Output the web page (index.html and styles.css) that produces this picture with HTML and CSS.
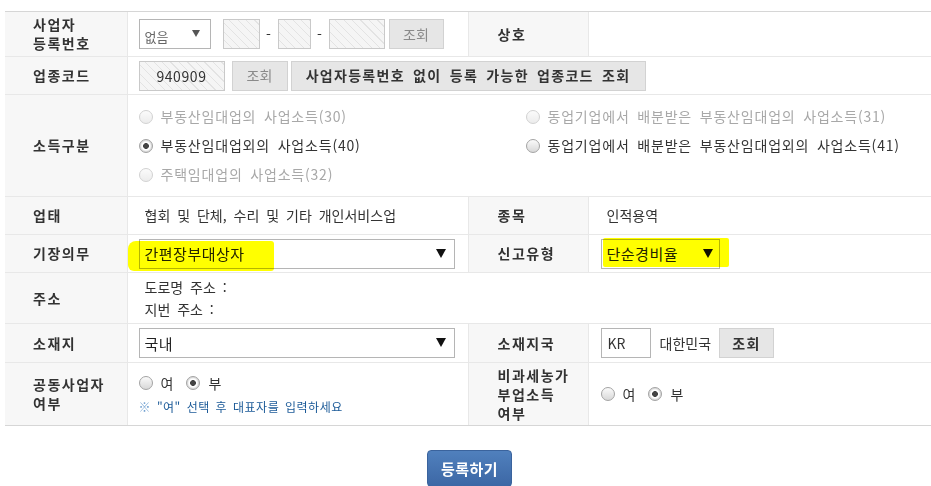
FILE: index.html
```html
<!DOCTYPE html>
<html lang="ko">
<head>
<meta charset="utf-8">
<title>사업자 정보</title>
<link rel="stylesheet" href="styles.css">
</head>
<body>
<div class="page">
<table class="form">
  <colgroup><col class="col-l1"><col class="col-v1"><col class="col-l2"><col class="col-v2"></colgroup>
  <tr class="r45">
    <th>사업자<br>등록번호</th>
    <td>
      <div class="line">
        <div class="sel sel-small"><span>없음</span><i class="arr arr-small"></i></div>
        <span class="hatch w37"></span><span class="dash">-</span><span class="hatch w32"></span><span class="dash">-</span><span class="hatch w56"></span>
        <button class="btn btn-dim w55">조회</button>
      </div>
    </td>
    <th class="th2">상호</th>
    <td class="td2"></td>
  </tr>
  <tr class="r38">
    <th>업종코드</th>
    <td colspan="3">
      <div class="line gap3">
        <span class="hatch code">940909</span>
        <button class="btn btn-dim w56">조회</button>
        <button class="btn btn-strong long">사업자등록번호 없이 등록 가능한 업종코드 조회</button>
      </div>
    </td>
  </tr>
  <tr class="r102">
    <th>소득구분</th>
    <td colspan="3">
      <div class="income">
        <label class="opt dis"><span class="rd"></span>부동산임대업의 사업소득(30)</label>
        <label class="opt dis"><span class="rd"></span>동업기업에서 배분받은 부동산임대업의 사업소득(31)</label>
        <label class="opt"><span class="rd on"></span>부동산임대업외의 사업소득(40)</label>
        <label class="opt"><span class="rd"></span>동업기업에서 배분받은 부동산임대업외의 사업소득(41)</label>
        <label class="opt dis"><span class="rd"></span>주택임대업의 사업소득(32)</label>
      </div>
    </td>
  </tr>
  <tr class="r38">
    <th>업태</th>
    <td><span class="txt">협회 및 단체, 수리 및 기타 개인서비스업</span></td>
    <th class="th2">종목</th>
    <td class="td2"><span class="txt">인적용역</span></td>
  </tr>
  <tr class="r38">
    <th>기장의무</th>
    <td class="hl-cell">
      <span class="hl hl-1"></span>
      <div class="sel sel-wide"><span class="val">간편장부대상자</span><i class="arr"></i></div>
    </td>
    <th class="th2">신고유형</th>
    <td class="td2 hl-cell">
      <span class="hl hl-2"></span>
      <div class="sel sel-mid"><span class="val">단순경비율</span><i class="arr"></i></div>
    </td>
  </tr>
  <tr class="r51">
    <th>주소</th>
    <td colspan="3" class="addr">
      <div class="txt">도로명 주소 :</div>
      <div class="txt">지번 주소 :</div>
    </td>
  </tr>
  <tr class="r39">
    <th>소재지</th>
    <td><div class="sel sel-wide"><span class="val">국내</span><i class="arr"></i></div></td>
    <th class="th2">소재지국</th>
    <td class="td2">
      <div class="line">
        <span class="inp kr">KR</span>
        <span class="country">대한민국</span>
        <button class="btn btn-strong w55">조회</button>
      </div>
    </td>
  </tr>
  <tr class="r63">
    <th>공동사업자<br>여부</th>
    <td>
      <div class="yn">
        <label class="opt"><span class="rd"></span>여</label>
        <label class="opt"><span class="rd on"></span>부</label>
      </div>
      <div class="note"><span class="mark">※</span> "여" 선택 후 대표자를 입력하세요</div>
    </td>
    <th class="th2">비과세농가<br>부업소득<br>여부</th>
    <td class="td2">
      <div class="yn">
        <label class="opt"><span class="rd"></span>여</label>
        <label class="opt"><span class="rd on"></span>부</label>
      </div>
    </td>
  </tr>
</table>
<div class="actions"><button class="submit">등록하기</button></div>
</div>
</body>
</html>
```
FILE: styles.css
```css
* { box-sizing: border-box; }
html, body { margin: 0; background: #fff; }
body {
  font-family: "Noto Sans CJK KR", "Noto Sans", sans-serif;
  font-size: 14px;
  line-height: 19px;
  color: #333;
  word-spacing: 3px;
}
.page { padding: 11px 0 0 5px; width: 931px; }

.form {
  border-collapse: collapse;
  table-layout: fixed;
  width: 926px;
}
.col-l1 { width: 122px; }
.col-v1 { width: 341px; }
.col-l2 { width: 120px; }
.col-v2 { width: 343px; }

.form th, .form td {
  border-top: 1px solid #e8e8e8;
  border-left: 1px solid #e8e8e8;
  vertical-align: middle;
  padding: 0;
}
.form tr > :first-child { border-left: 0; }
.form tr:first-child > * { border-top-color: #d6d6d6; }
.form tr:last-child > * { border-bottom: 1px solid #d6d6d6; }

.form th {
  background: #f7f7f7;
  text-align: left;
  font-weight: bold;
  letter-spacing: 1.5px;
  padding-left: 28px;
  color: #333;
}
.form th.th2 { padding-left: 29px; }
.form td { padding-left: 11px; }
.form td.td2 { padding-left: 12px; }

.r45 > * { height: 45px; }
.r38 > * { height: 38px; }
.r102 > * { height: 102px; }
.r51 > * { height: 51px; }
.r39 > * { height: 39px; }
.r63 > * { height: 63px; }

.line { display: flex; align-items: center; }
.gap3 { gap: 3px; }
.txt { padding-left: 6px; }

/* select boxes */
.sel {
  display: flex;
  align-items: center;
  justify-content: space-between;
  height: 30px;
  border: 1px solid #b5b5b5;
  background: #fff;
  padding: 0 8px 0 5px;
  color: #222;
}
.sel .val { font-size: 15px; letter-spacing: 0.5px; }
.sel-small { width: 72px; font-size: 13px; color: #666; padding: 4px 10px 0 5px; margin-right: 12px; }
.sel-wide { width: 316px; }
.sel-mid { width: 119px; padding-right: 6px; }
.arr {
  display: block;
  width: 0; height: 0;
  border-left: 5px solid transparent;
  border-right: 5px solid transparent;
  border-top: 9px solid #111;
  margin-top: -1px;
}
.arr-small { border-left-width: 4px; border-right-width: 4px; border-top: 7px solid #555; margin-top: -5px; }

/* hatched inputs */
.hatch {
  display: inline-block;
  height: 30px;
  border: 1px solid #c9c9c9;
  background: repeating-linear-gradient(45deg, #f5f5f5 0 5px, #e3e3e3 5px 6px);
}
.w37 { width: 37px; }
.w32 { width: 33px; }
.w56 { width: 56px; }
.dash { width: 18px; text-align: center; color: #333; }
.code { width: 86px; line-height: 28px; text-align: center; color: #333; letter-spacing: 0.6px; }

.inp {
  display: inline-block;
  height: 30px;
  border: 1px solid #b5b5b5;
  background: #fff;
  line-height: 28px;
}
.kr { width: 50px; padding-left: 6px; }
.country { margin: 0 8px 0 9px; }

/* buttons */
.btn {
  height: 30px;
  border: 1px solid #d2d2d2;
  background: #e6e6e6;
  font: inherit;
  word-spacing: 3px;
  padding: 0;
  cursor: pointer;
}
.btn-dim { color: #8a8a8a; }
.btn-strong { color: #333; font-weight: bold; letter-spacing: 1.3px; }
.w55 { width: 55px; }
.hatch + .btn { margin-left: 4px; }
.long { width: 355px; }

/* radios */
.opt { display: inline-flex; align-items: center; gap: 8px; white-space: nowrap; }
.opt.dis { color: #a8a8a8; }
.income .opt { letter-spacing: 0.8px; }
.rd {
  position: relative;
  display: inline-block;
  width: 14px; height: 14px;
  border-radius: 50%;
  border: 1px solid #a4a4a4;
  background: linear-gradient(#fafafa, #d8d8d8);
  flex: none;
}
.dis .rd { border-color: #d2d2d2; background: linear-gradient(#fbfbfb, #ececec); }
.rd.on { background: radial-gradient(circle, #444 0 2.6px, #fff 3.2px 4px, #dcdcdc 5.5px); }

.income {
  display: grid;
  grid-template-columns: 387px auto;
  grid-auto-rows: 29px;
  align-items: center;
}
.yn { display: flex; gap: 13px; height: 22px; align-items: center; }
.note { font-size: 12px; color: #1b5a98; margin-top: 3px; word-spacing: 2px; letter-spacing: 0.5px; }
.mark { color: #6f9fd0; }

.addr { padding-top: 6px; line-height: 22px; }

/* highlighter marks */
.hl-cell { position: relative; }
.hl {
  position: absolute;
  background: #ffff00;
  mix-blend-mode: multiply;
  pointer-events: none;
}
.hl-1 { left: 0; top: 6px; width: 146px; height: 30px; border-radius: 8px 3px 3px 6px; }
.hl-2 { left: 14px; top: 3px; width: 126px; height: 29px; border-radius: 2px; }

.actions { width: 926px; text-align: center; padding: 24px 0 0 3px; }
.submit {
  width: 85px; height: 37px;
  border: 1px solid #3a639d;
  border-radius: 4px;
  background: linear-gradient(#5080bd, #3c67a5);
  color: #fff;
  font: inherit;
  font-size: 15px;
  font-weight: bold;
  letter-spacing: 0.5px;
  cursor: pointer;
}
```
